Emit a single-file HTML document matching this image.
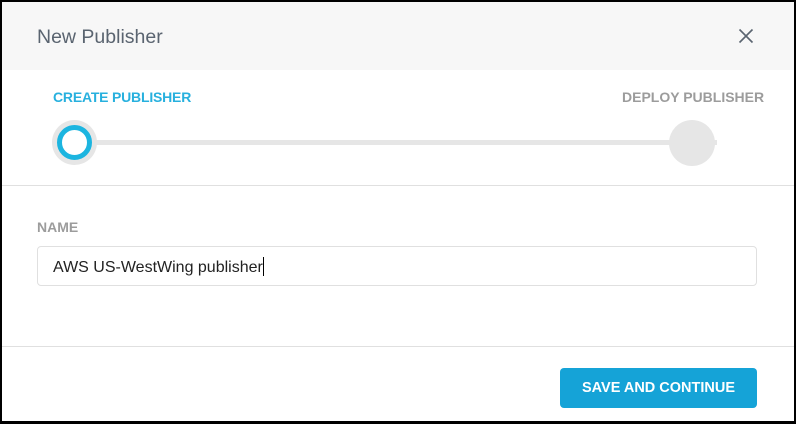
<!DOCTYPE html>
<html><head><style>
*{margin:0;padding:0;box-sizing:border-box}
body{width:796px;height:424px;background:#000;position:relative;overflow:hidden;font-family:"Liberation Sans",sans-serif}
#m{position:absolute;left:2px;top:2px;width:792px;height:419px;background:#fff}
.a{position:absolute}
</style></head><body>
<div id="m"></div>
<div class="a" style="left:2px;top:2px;width:792px;height:68px;background:#f7f7f7"></div>
<div class="a" style="left:37px;top:26px;font-size:19.5px;color:#5a6470">New Publisher</div>
<svg class="a" style="left:738px;top:28px" width="16" height="16"><path d="M1.5 1.5L14.5 14.5M14.5 1.5L1.5 14.5" stroke="#5a6470" stroke-width="1.6"/></svg>
<div class="a" style="left:53px;top:89px;font-size:14px;font-weight:bold;color:#27b0de;letter-spacing:-0.2px">CREATE PUBLISHER</div>
<div class="a" style="left:622px;top:89px;font-size:14px;font-weight:bold;color:#9c9c9c;letter-spacing:0px">DEPLOY PUBLISHER</div>
<div class="a" style="left:90px;top:140px;width:627px;height:5px;background:#e6e6e6"></div>
<div class="a" style="left:52px;top:120px;width:45px;height:45px;border-radius:50%;background:#e6e6e6"></div>
<div class="a" style="left:57px;top:125px;width:35px;height:35px;border-radius:50%;border:5px solid #1cb5e0;background:#fff"></div>
<div class="a" style="left:669px;top:120px;width:46px;height:46px;border-radius:50%;background:#e6e6e6"></div>
<div class="a" style="left:2px;top:185px;width:792px;height:1px;background:#e0e0e0"></div>
<div class="a" style="left:37px;top:219px;font-size:14px;font-weight:bold;color:#9c9c9c">NAME</div>
<div class="a" style="left:37px;top:246px;width:720px;height:40px;border:1px solid #e0e0e0;border-radius:4px"></div>
<div class="a" style="left:53px;top:257px;font-size:16px;color:#222">AWS US-WestWing publisher<span style="display:inline-block;width:1px;height:19px;background:#000;vertical-align:-4px"></span></div>
<div class="a" style="left:2px;top:346px;width:792px;height:1px;background:#e0e0e0"></div>
<div class="a" style="left:560px;top:368px;width:197px;height:40px;background:#15a3d7;border-radius:4px;color:#fff;font-size:14.5px;font-weight:bold;text-align:center;line-height:40px;letter-spacing:0px">SAVE AND CONTINUE</div>
</body></html>
